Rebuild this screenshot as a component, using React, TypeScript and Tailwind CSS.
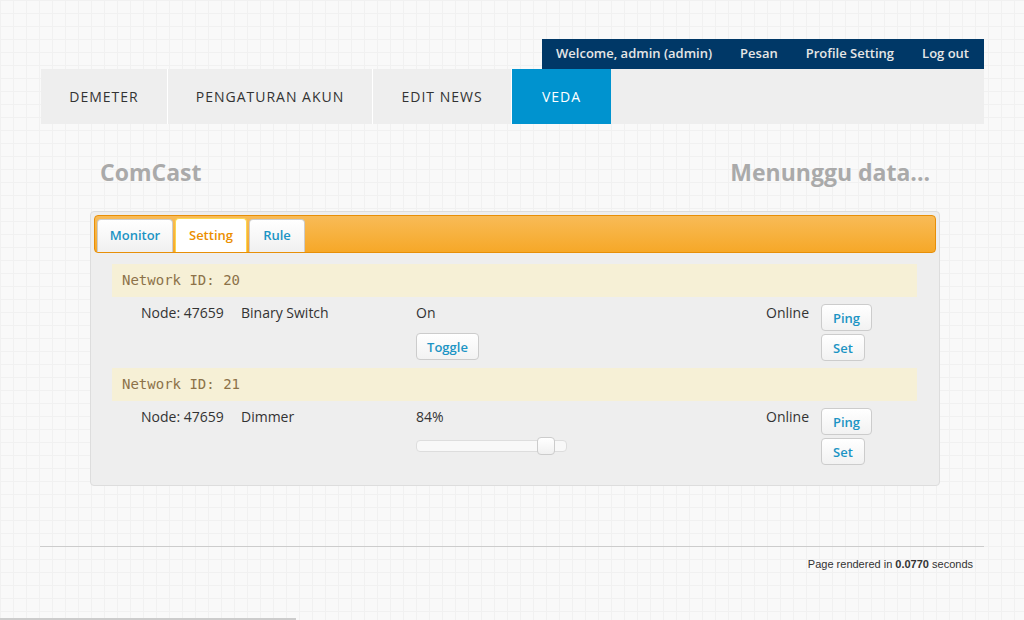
import React from 'react';

const nav = [
  { label: 'DEMETER', w: 'w-[127px]' },
  { label: 'PENGATURAN AKUN', w: 'w-[205px]' },
  { label: 'EDIT NEWS', w: 'w-[139px]' },
];

function SmallButton({ label, className = '' }: { label: string; className?: string }) {
  return (
    <button
      className={`h-[27px] rounded-[4px] border border-[#cccccc] bg-[linear-gradient(#ffffff,#f2f2f2)] text-[13px] font-semibold text-[#1c94c4] ${className}`}
    >
      {label}
    </button>
  );
}

function NetworkHeader({ id }: { id: number }) {
  return (
    <div className="h-[33px] bg-[#f6f0d6] pl-[10px] flex items-center font-['DejaVu_Sans_Mono',monospace] text-[14px] text-[#8c7249]">
      Network ID: {id}
    </div>
  );
}

function NodeRow({ type, value, control }: { type: string; value: string; control: React.ReactNode }) {
  return (
    <div className="flex pl-[29px] pt-[7px] pb-[7px] text-[14px] leading-[18px] text-[#333333]">
      <div className="w-[100px]">Node: 47659</div>
      <div className="w-[175px]">{type}</div>
      <div className="flex-1 flex flex-col items-start">
        <div>{value}</div>
        <div className="mt-[11px]">{control}</div>
      </div>
      <div className="w-[55px]">Online</div>
      <div className="w-[96px] flex flex-col items-start gap-[3px]">
        <SmallButton label="Ping" className="w-[51px]" />
        <SmallButton label="Set" className="w-[44px]" />
      </div>
    </div>
  );
}

export default function App() {
  return (
    <div className="relative min-h-[620px] flex flex-col bg-[#f9f9f9] bg-[linear-gradient(#f1f1f1_1px,transparent_1px),linear-gradient(90deg,#f1f1f1_1px,transparent_1px)] bg-[size:13px_13px] font-['Open_Sans',sans-serif]">
      <div className="w-[943px] ml-[41px] pt-[39px]">
        {/* top user bar */}
        <div className="flex justify-end">
          <div className="h-[30px] bg-[#003867] flex items-center pl-[14px] pr-[15px] gap-[28px] text-[13px] font-semibold text-[#e6e6e6]">
            <span>Welcome, admin (admin)</span>
            <span>Pesan</span>
            <span>Profile Setting</span>
            <span>Log out</span>
          </div>
        </div>
        {/* main nav */}
        <div className="h-[55px] bg-[#eeeeee] flex">
          {nav.map((n) => (
            <div
              key={n.label}
              className={`${n.w} h-full flex items-center justify-center border-r border-white text-[14px] tracking-[1px] text-[#333333]`}
            >
              {n.label}
            </div>
          ))}
          <div className="w-[99px] h-full flex items-center justify-center bg-[#0093cf] text-[14px] tracking-[1px] text-white">
            VEDA
          </div>
        </div>
      </div>

      {/* headings */}
      <div className="w-[830px] ml-[100px] mt-[33px] flex justify-between items-center font-bold text-[23px] leading-[30px] text-[#aaaaaa]">
        <span>ComCast</span>
        <span>Menunggu data...</span>
      </div>

      {/* tabs widget */}
      <div className="w-[850px] ml-[90px] mt-[24px] rounded-[4px] border border-[#dddddd] bg-[#eeeeee] p-[3px] pb-[13px]">
        <div className="h-[38px] rounded-[4px] border border-[#e78f08] bg-[linear-gradient(#f8bb57,#f6a828)] flex items-end pl-[2px] gap-[2px]">
          <div className="h-[33px] w-[76px] rounded-t-[4px] border border-b-0 border-[#cccccc] bg-[linear-gradient(#ffffff,#f0f0f0)] flex items-center justify-center text-[13px] font-semibold text-[#1c94c4]">
            Monitor
          </div>
          <div className="h-[34px] w-[72px] rounded-t-[4px] border border-b-0 border-[#fbd850] bg-white flex items-center justify-center text-[13px] font-semibold text-[#eb8f00]">
            Setting
          </div>
          <div className="h-[33px] w-[56px] rounded-t-[4px] border border-b-0 border-[#cccccc] bg-[linear-gradient(#ffffff,#f0f0f0)] flex items-center justify-center text-[13px] font-semibold text-[#1c94c4]">
            Rule
          </div>
        </div>

        <div className="ml-[18px] mr-[19px] mt-[11px]">
          <NetworkHeader id={20} />
          <NodeRow
            type="Binary Switch"
            value="On"
            control={<SmallButton label="Toggle" className="w-[63px]" />}
          />
          <NetworkHeader id={21} />
          <NodeRow
            type="Dimmer"
            value="84%"
            control={
              <div className="relative w-[151px] h-[12px] mt-[3px] rounded-[4px] border border-[#dddddd] bg-[#f8f8f8]">
                <div className="absolute left-[120px] top-[-4px] w-[18px] h-[18px] rounded-[4px] border border-[#cccccc] bg-[linear-gradient(#ffffff,#f0f0f0)]" />
              </div>
            }
          />
        </div>
      </div>

      {/* footer */}
      <div className="w-[944px] ml-[40px] mt-[60px] border-t border-[#cccccc] pt-[9px] pr-[11px] text-right font-['Liberation_Sans',sans-serif] text-[11px] text-[#333333]">
        Page rendered in <b>0.0770</b> seconds
      </div>

      <div className="mt-auto w-[296px] h-[2px] bg-[#cccccc]" />
    </div>
  );
}
